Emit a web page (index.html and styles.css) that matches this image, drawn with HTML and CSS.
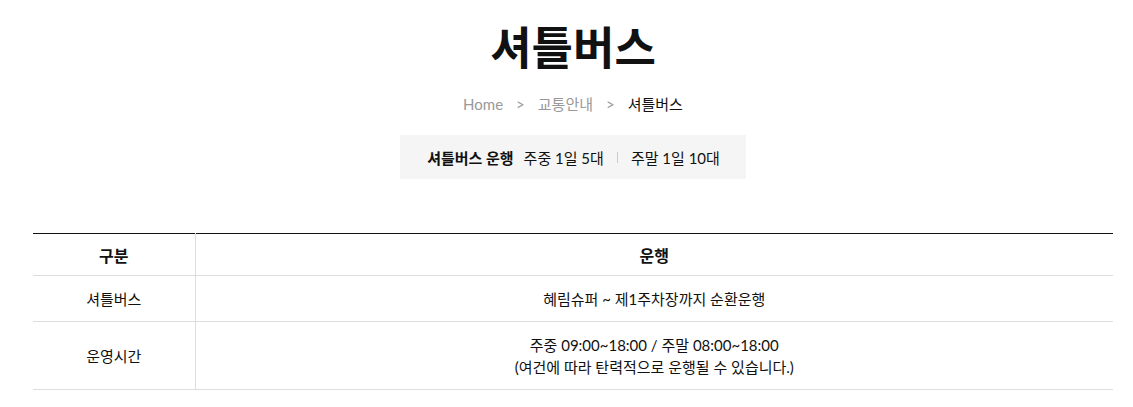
FILE: index.html
```html
<!DOCTYPE html>
<html lang="ko">
<head>
<meta charset="utf-8">
<title>셔틀버스</title>
<link rel="stylesheet" href="styles.css">
</head>
<body>
<div class="page">
  <h1 class="title">셔틀버스</h1>
  <nav class="crumbs">
    <span class="crumb">Home</span>
    <span class="sep">&gt;</span>
    <span class="crumb">교통안내</span>
    <span class="sep">&gt;</span>
    <span class="crumb current">셔틀버스</span>
  </nav>
  <div class="info-wrap">
    <div class="info">
      <strong class="info-label">셔틀버스 운행</strong>
      <span>주중 1일 5대</span>
      <span class="divider"></span>
      <span>주말 1일 10대</span>
    </div>
  </div>
  <table class="bus-table">
    <thead>
      <tr><th class="col-a">구분</th><th>운행</th></tr>
    </thead>
    <tbody>
      <tr class="row-route"><td class="col-a">셔틀버스</td><td>혜림슈퍼 ~ 제1주차장까지 순환운행</td></tr>
      <tr class="row-time"><td class="col-a">운영시간</td><td>주중 09:00~18:00 / 주말 08:00~18:00<br>(여건에 따라 탄력적으로 운행될 수 있습니다.)</td></tr>
    </tbody>
  </table>
</div>
</body>
</html>
```
FILE: styles.css
```css
* { box-sizing: border-box; }
html, body { margin: 0; padding: 0; background: #fff; }
body {
  font-family: Lato, "Noto Sans CJK KR", sans-serif;
  color: #222;
}
.page {
  width: 1080px;
  margin-left: 33px;
  padding-top: 17px;
}
.title {
  margin: 0;
  text-align: center;
  font-size: 45px;
  line-height: 62px;
  font-weight: 700;
  color: #111;
}
.crumbs {
  display: flex;
  justify-content: center;
  align-items: center;
  gap: 13px;
  margin-top: 14px;
  font-size: 15px;
  line-height: 22px;
  color: #999;
}
.crumb.current { color: #111; }
.sep { color: #999; font-size: 15px; }
.info-wrap {
  display: flex;
  justify-content: center;
  margin-top: 20px;
}
.info {
  display: flex;
  align-items: center;
  gap: 10px;
  background: #f5f5f5;
  height: 44px;
  padding: 0 26px 0 27px;
  font-size: 15px;
  color: #111;
}
.info-label { font-weight: 700; color: #111; }
.divider {
  width: 1px;
  height: 11px;
  background: #ccc;
  margin: 0 3px;
}
.bus-table {
  width: 1080px;
  margin-top: 54px;
  border-collapse: collapse;
  border-top: 1px solid #111;
  font-size: 15px;
  color: #111;
  text-align: center;
}
.bus-table th, .bus-table td {
  border-bottom: 1px solid #ddd;
  padding: 0;
  font-weight: 400;
}
.bus-table th {
  font-size: 16px;
  font-weight: 700;
  color: #111;
  height: 42px;
}
.bus-table .col-a {
  width: 162px;
  border-right: 1px solid #ddd;
}
.row-route td { height: 46px; }
.row-time td { height: 68px; line-height: 22px; }
```
